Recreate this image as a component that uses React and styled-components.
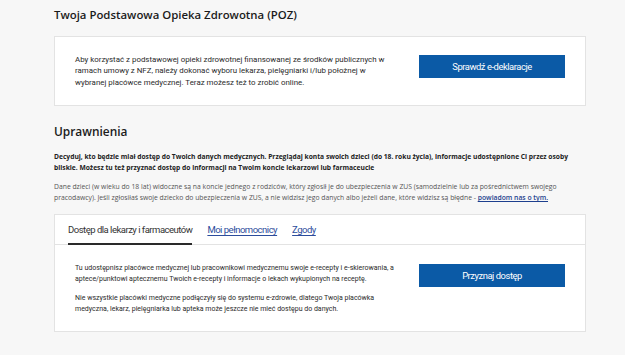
import styled, { createGlobalStyle } from 'styled-components';

const Global = createGlobalStyle`
  html, body { margin: 0; padding: 0; background: #f7f7f7; }
  body { font-family: "Open Sans", "Noto Sans", sans-serif; color: #222; }
`;

const Page = styled.main`
  width: 532px;
  padding: 7px 0 20px 54px;
`;

const Heading = styled.h2`
  margin: 0 0 ${p => p.$after}px;
  font-size: ${p => p.$size || 11.9}px;
  line-height: 16px;
  font-weight: 600;
  color: #1b1b1b;
`;

const Card = styled.section`
  background: #fff;
  border: 1px solid #e3e3e3;
  margin-bottom: ${p => p.$gap || 0}px;
`;

const CardBody = styled.div`
  display: flex;
  justify-content: space-between;
  align-items: flex-start;
  padding: ${p => p.$top}px 20px ${p => p.$bottom}px 20px;
`;

const CardText = styled.div`
  font-family: "Roboto", "Open Sans", sans-serif;
  font-size: ${p => p.$size}px;
  line-height: ${p => p.$lh}px;
  color: #2a2a2a;

  p { margin: 0; }
  p + p { margin-top: 8px; }
`;

const Line = styled.span`
  display: block;
  white-space: nowrap;
`;

const PrimaryButton = styled.button`
  width: 146px;
  height: 23px;
  margin-top: 1px;
  border: 0;
  background: #0b5aa6;
  color: #fff;
  font-family: "Roboto", "Open Sans", sans-serif;
  font-size: 9.4px;
  letter-spacing: -0.45px;
  cursor: pointer;
  flex-shrink: 0;
`;

const Lead = styled.p`
  margin: 0 0 8px;
  font-size: 6.7px;
  line-height: 11.3px;
  font-weight: 700;
  color: #222;
`;

const Note = styled.p`
  margin: 0 0 11px;
  font-size: 6.8px;
  line-height: 11px;
  color: #555;

  a {
    color: #1d3f8e;
    font-weight: 600;
    text-decoration: underline;
  }
`;

const Tabs = styled.nav`
  display: flex;
  gap: 15px;
  height: 29px;
  padding: 0 13px;
  border-bottom: 1px solid #e3e3e3;
`;

const Tab = styled.a`
  display: flex;
  align-items: center;
  font-family: "Roboto", "Open Sans", sans-serif;
  font-size: 9.5px;
  letter-spacing: -0.5px;
  color: ${p => (p.$active ? '#333' : '#2c4c9c')};
  text-decoration: ${p => (p.$active ? 'none' : 'underline')};
  text-underline-offset: 2px;
  border-bottom: 2px solid ${p => (p.$active ? '#2a2a2a' : 'transparent')};
  margin-bottom: -1px;
  cursor: pointer;
`;

const Lines = ({ items }) => items.map(t => <Line key={t}>{t}</Line>);

export default function App() {
  return (
    <Page>
      <Global />
      <Heading as="h1" $size={11.4} $after={13}>Twoja Podstawowa Opieka Zdrowotna (POZ)</Heading>
      <Card $gap={17}>
        <CardBody $top={17} $bottom={17}>
          <CardText $size={7.9} $lh={11.3}>
            <p>
              <Lines items={[
                'Aby korzystać z podstawowej opieki zdrowotnej finansowanej ze środków publicznych w',
                'ramach umowy z NFZ, należy dokonać wyboru lekarza, pielęgniarki i/lub położnej w',
                'wybranej placówce medycznej. Teraz możesz też to zrobić online.',
              ]} />
            </p>
          </CardText>
          <PrimaryButton>Sprawdź e-deklaracje</PrimaryButton>
        </CardBody>
      </Card>

      <Heading $after={12}>Uprawnienia</Heading>
      <Lead>
        <Lines items={[
          'Decyduj, kto będzie miał dostęp do Twoich danych medycznych. Przeglądaj konta swoich dzieci (do 18. roku życia), informacje udostępnione Ci przez osoby',
          'bliskie. Możesz tu też przyznać dostęp do informacji na Twoim koncie lekarzowi lub farmaceucie',
        ]} />
      </Lead>
      <Note>
        <Line>Dane dzieci (w wieku do 18 lat) widoczne są na koncie jednego z rodziców, który zgłosił je do ubezpieczenia w ZUS (samodzielnie lub za pośrednictwem swojego</Line>
        <Line>pracodawcy). Jeśli zgłosiłaś swoje dziecko do ubezpieczenia w ZUS, a nie widzisz jego danych albo jeżeli dane, które widzisz są błędne - <a href="#">powiadom nas o tym.</a></Line>
      </Note>

      <Card>
        <Tabs>
          <Tab $active>Dostęp dla lekarzy i farmaceutów</Tab>
          <Tab>Moi pełnomocnicy</Tab>
          <Tab>Zgody</Tab>
        </Tabs>
        <CardBody $top={18} $bottom={16}>
          <CardText $size={7} $lh={11}>
            <p>
              <Lines items={[
                'Tu udostępnisz placówce medycznej lub pracownikowi medycznemu swoje e-recepty i e-skierowania, a',
                'aptece/punktowi aptecznemu Twoich e-recepty i informacje o lekach wykupionych na receptę.',
              ]} />
            </p>
            <p>
              <Lines items={[
                'Nie wszystkie placówki medyczne podłączyły się do systemu e-zdrowie, dlatego Twoja placówka',
                'medyczna, lekarz, pielęgniarka lub apteka może jeszcze nie mieć dostępu do danych.',
              ]} />
            </p>
          </CardText>
          <PrimaryButton>Przyznaj dostęp</PrimaryButton>
        </CardBody>
      </Card>
    </Page>
  );
}
